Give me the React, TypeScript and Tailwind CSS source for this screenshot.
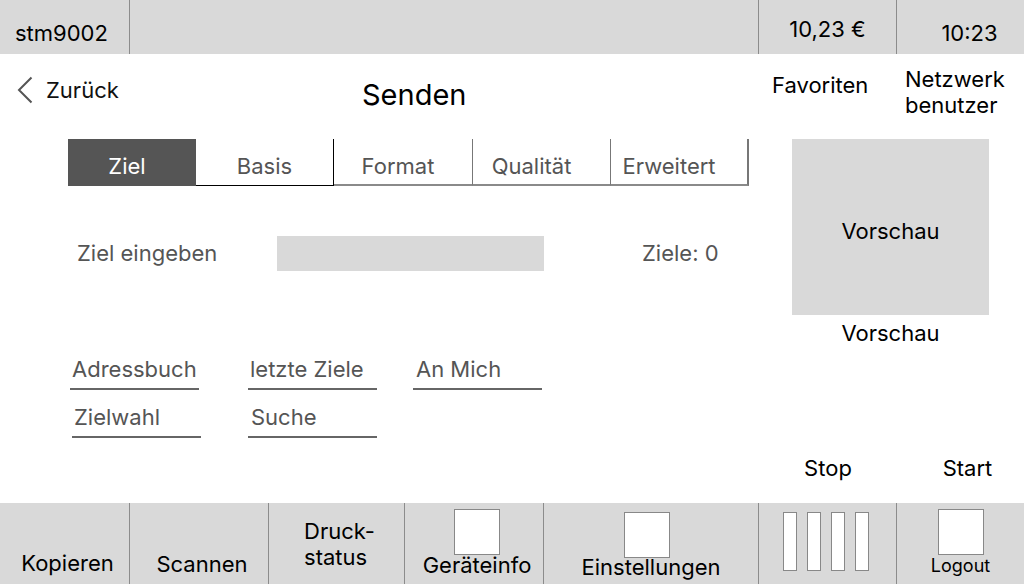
import React from "react";

const font = { fontFamily: "Inter, 'Noto Sans', sans-serif" };

function Tab({ label, cls }: { label: string; cls: string }) {
  return <div className={`h-[47px] pt-[15px] leading-[25px] text-[22px] text-center ${cls}`}>{label}</div>;
}

function LinkItem({ label, cls }: { label: string; cls: string }) {
  return (
    <div className={`w-[129px] h-[33px] leading-[25px] text-[22px] text-[#555] border-b-2 border-[#666] ${cls}`}>
      {label}
    </div>
  );
}

export default function App() {
  return (
    <div className="w-[1024px] h-[584px] flex flex-col bg-white overflow-hidden" style={font}>
      {/* Top bar */}
      <div className="flex h-[54px] bg-[#d9d9d9] text-black text-[22px] leading-[25px]">
        <div className="w-[130px] border-r border-[#8c8c8c] pl-[15px] pt-[21px]">stm9002</div>
        <div className="w-[629px] border-r border-[#8c8c8c]" />
        <div className="w-[138px] border-r border-[#8c8c8c] pt-[17px] text-center">10,23 €</div>
        <div className="flex-1 pt-[21px] pl-[18px] text-center">10:23</div>
      </div>

      {/* Main */}
      <div className="flex-1 flex flex-col">
        {/* Header */}
        <div className="h-[85px] flex items-start">
          <div className="w-[362px] flex items-start">
            <svg className="ml-[17px] mt-[22px]" width="16" height="28" viewBox="0 0 16 28">
              <polyline points="14.5,1.5 2,14 14.5,26.5" fill="none" stroke="#555" strokeWidth="2" />
            </svg>
            <div className="ml-[13px] mt-[24px] text-[22px] leading-[25px] text-[#111]">Zurück</div>
          </div>
          <div className="w-[410px] mt-[24px] text-[29px] leading-[34px] text-black">Senden</div>
          <div className="w-[133px] mt-[19px] text-[22px] leading-[25px] text-black">Favoriten</div>
          <div className="flex-1 mt-[12px] text-[22px] leading-[26px] text-black">
            Netzwerk
            <br />
            benutzer
          </div>
        </div>

        {/* Body */}
        <div className="flex-1 flex">
          {/* Left */}
          <div className="w-[759px] pl-[68px] flex flex-col">
            <div className="flex">
              <Tab label="Ziel" cls="w-[128px] bg-[#555] text-white pr-[10px]" />
              <Tab label="Basis" cls="w-[138px] text-[#555] border-r border-b border-black" />
              <Tab label="Format" cls="w-[139px] text-[#555] border-r border-[#777] border-b-2 border-b-[#8a8a8a] pr-[10px]" />
              <Tab label="Qualität" cls="w-[138px] text-[#555] border-r border-[#777] border-b-2 border-b-[#8a8a8a] pr-[20px]" />
              <Tab label="Erweitert" cls="w-[138px] text-[#555] border-r-2 border-[#777] border-b-2 border-b-[#8a8a8a] pr-[20px]" />
            </div>

            <div className="mt-[50px] h-[35px] flex items-center text-[22px] leading-[25px] text-[#555]">
              <div className="w-[209px] pl-[9px]">Ziel eingeben</div>
              <div className="w-[267px] h-[35px] bg-[#d9d9d9]" />
              <div className="ml-[98px]">Ziele: 0</div>
            </div>

            <div className="mt-[86px] flex ml-[2px]">
              <LinkItem label="Adressbuch" cls="pl-[2px]" />
              <LinkItem label="letzte Ziele" cls="ml-[49px] pl-[2px]" />
              <LinkItem label="An Mich" cls="ml-[36px] pl-[3px]" />
            </div>
            <div className="mt-[15px] flex ml-[4px]">
              <LinkItem label="Zielwahl" cls="pl-[2px]" />
              <LinkItem label="Suche" cls="ml-[47px] pl-[3px]" />
            </div>
          </div>

          {/* Right */}
          <div className="flex-1 flex flex-col">
            <div className="ml-[33px] w-[197px] h-[176px] bg-[#d9d9d9] flex flex-col items-center pt-[80px]">
              <div className="text-[22px] leading-[25px] text-black">Vorschau</div>
            </div>
            <div className="ml-[33px] w-[197px] mt-[6px] text-center text-[22px] leading-[25px] text-black">Vorschau</div>
            <div className="mt-[110px] flex text-[22px] leading-[25px] text-black">
              <div className="w-[138px] text-center">Stop</div>
              <div className="flex-1 text-center pl-[14px]">Start</div>
            </div>
          </div>
        </div>
      </div>

      {/* Bottom bar */}
      <div className="h-[81px] flex bg-[#d9d9d9] text-black text-[22px]">
        <div className="w-[130px] border-r border-[#8c8c8c] flex flex-col justify-end items-center pb-[8px] pl-[6px] leading-[25px]">
          Kopieren
        </div>
        <div className="w-[139px] border-r border-[#8c8c8c] flex flex-col justify-end items-center pb-[7px] pl-[6px] leading-[25px]">
          Scannen
        </div>
        <div className="w-[136px] border-r border-[#8c8c8c] flex flex-col justify-end items-center pb-[14px] pl-[6px] leading-[26px]">
          <div>
            Druck-
            <br />
            status
          </div>
        </div>
        <div className="w-[139px] border-r border-[#8c8c8c] flex flex-col items-center pt-[6px] pl-[6px]">
          <div className="w-[46px] h-[46px] bg-white border border-[#888]" />
          <div className="leading-[20px]">Geräteinfo</div>
        </div>
        <div className="w-[215px] border-r border-[#8c8c8c] flex flex-col items-center pt-[9px]">
          <div className="w-[46px] h-[46px] bg-white border border-[#888] -translate-x-[4px]" />
          <div className="leading-[18px]">Einstellungen</div>
        </div>
        <div className="w-[138px] border-r border-[#8c8c8c] flex justify-center gap-[10px] pt-[9px] pr-[4px]">
          <div className="w-[14px] h-[59px] bg-white border border-[#888]" />
          <div className="w-[14px] h-[59px] bg-white border border-[#888]" />
          <div className="w-[14px] h-[59px] bg-white border border-[#888]" />
          <div className="w-[14px] h-[59px] bg-white border border-[#888]" />
        </div>
        <div className="flex-1 flex flex-col items-center pt-[6px]">
          <div className="w-[46px] h-[46px] bg-white border border-[#888]" />
          <div className="mt-[2px] text-[18px] leading-[18px]">Logout</div>
        </div>
      </div>
    </div>
  );
}
